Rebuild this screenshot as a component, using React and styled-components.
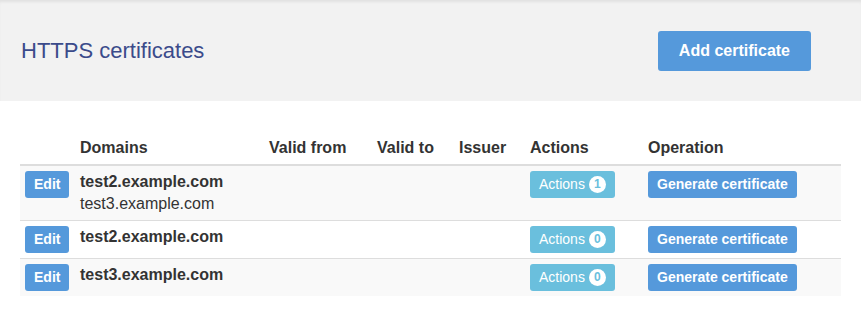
import React from 'react';
import styled, { createGlobalStyle } from 'styled-components';

const GlobalStyle = createGlobalStyle`
  body {
    margin: 0;
    background: #fff;
    font-family: "Liberation Sans", Arial, sans-serif;
    color: #333;
  }
`;

const PageHeader = styled.div`
  display: flex;
  align-items: center;
  justify-content: space-between;
  height: 101px;
  padding: 0 50px 0 21px;
  background: #f2f2f2;
  box-shadow: inset 0 3px 3px -1px rgba(0, 0, 0, 0.07);
`;

const Title = styled.h1`
  margin: 0;
  font-size: 22px;
  font-weight: normal;
  color: #3b4b8b;
`;

const Button = styled.button`
  display: inline-flex;
  align-items: center;
  gap: 4px;
  border: 1px solid transparent;
  border-radius: 3px;
  font-family: inherit;
  color: #fff;
  cursor: pointer;
  white-space: nowrap;
  background: ${p => (p.$variant === 'info' ? '#6abfdd' : '#5599db')};
  font-weight: ${p => (p.$variant === 'info' ? 'normal' : 'bold')};
  font-size: ${p => (p.$size === 'lg' ? '16px' : '14px')};
  line-height: ${p => (p.$size === 'lg' ? '22px' : '19px')};
  padding: ${p => (p.$size === 'lg' ? '8px 20px' : '3px 8px')};
`;

const Badge = styled.span`
  display: inline-block;
  min-width: 17px;
  height: 17px;
  box-sizing: border-box;
  border-radius: 9px;
  background: #fff;
  color: #6abfdd;
  font-size: 12px;
  font-weight: bold;
  line-height: 17px;
  text-align: center;
`;

const Table = styled.table`
  width: 821px;
  margin: 28px 20px 0;
  border-collapse: collapse;
  table-layout: fixed;
  font-size: 16px;

  tbody tr + tr td {
    border-top: 1px solid #ddd;
  }
`;

const Th = styled.th`
  box-sizing: border-box;
  width: ${p => p.$w}px;
  padding: 8px 8px 5px;
  line-height: 22px;
  text-align: left;
  border-bottom: 2px solid #ddd;
  white-space: nowrap;
  &:first-child { padding-left: 5px; }
`;

const Row = styled.tr`
  background: ${p => (p.$striped ? '#f9f9f9' : '#fff')};
`;

const Td = styled.td`
  padding: 5px 8px;
  line-height: 22px;
  vertical-align: top;
  &:first-child { padding-left: 5px; }
`;

const Domain = styled.div`
  font-weight: ${p => (p.$main ? 'bold' : 'normal')};
`;

const columns = [
  ['', 52],
  ['Domains', 189],
  ['Valid from', 108],
  ['Valid to', 82],
  ['Issuer', 71],
  ['Actions', 118],
  ['Operation', 201],
];

const certs = [
  { domains: ['test2.example.com', 'test3.example.com'], actions: 1 },
  { domains: ['test2.example.com'], actions: 0 },
  { domains: ['test3.example.com'], actions: 0 },
];

export default function App() {
  return (
    <>
      <GlobalStyle />
      <PageHeader>
        <Title>HTTPS certificates</Title>
        <Button $size="lg">Add certificate</Button>
      </PageHeader>
      <Table>
        <thead>
          <tr>
            {columns.map(([label, w], i) => (
              <Th key={i} $w={w}>{label}</Th>
            ))}
          </tr>
        </thead>
        <tbody>
          {certs.map((c, i) => (
            <Row key={i} $striped={i % 2 === 0}>
              <Td><Button>Edit</Button></Td>
              <Td>
                {c.domains.map((d, j) => (
                  <Domain key={j} $main={j === 0}>{d}</Domain>
                ))}
              </Td>
              <Td />
              <Td />
              <Td />
              <Td>
                <Button $variant="info">
                  Actions <Badge>{c.actions}</Badge>
                </Button>
              </Td>
              <Td><Button>Generate certificate</Button></Td>
            </Row>
          ))}
        </tbody>
      </Table>
    </>
  );
}
